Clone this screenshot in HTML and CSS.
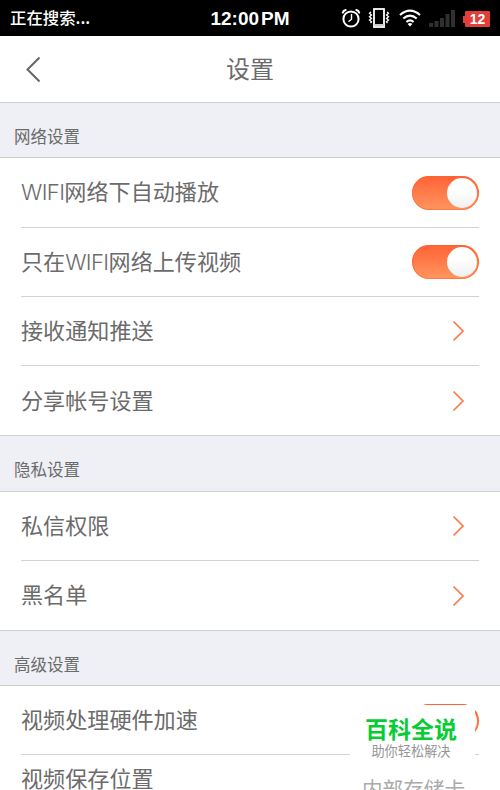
FILE: index.html
```
<!DOCTYPE html>
<html lang="zh-CN">
<head>
<meta charset="utf-8">
<title>设置</title>
<link rel="stylesheet" href="styles.css">
</head>
<body>
<div class="screen">
  <header class="status">
    <span class="carrier">正在搜索...</span>
    <span class="clock">12:00<span class="meridiem">PM</span></span>
    <div class="indicators">
      <svg class="alarm" width="20" height="20" viewBox="0 0 20 20"><g fill="none" stroke="#fff" stroke-width="2" stroke-linecap="round"><circle cx="10" cy="11" r="7.6"/><path d="M10.5 6.5V11.2L8 13.2" stroke-width="1.4"/><path d="M1.8 4.6Q2.5 2.4 4.7 2M18.2 4.6Q17.5 2.4 15.3 2" stroke-width="2"/></g></svg>
      <svg class="vibrate" width="22" height="20" viewBox="0 0 22 20"><g fill="none" stroke="#fff"><rect x="6" y="1" width="10" height="18" stroke-width="1.8"/><path d="M6 17H16" stroke-width="2" stroke="#ccc"/><path d="M3 4L1.5 5.3L3.5 7L1.5 8.7L3.5 10.4L1.5 12.1L3.5 13.8L2.5 15M19 4L20.5 5.3L18.5 7L20.5 8.7L18.5 10.4L20.5 12.1L18.5 13.8L19.5 15" stroke-width="1.3"/></g></svg>
      <svg class="wifi" width="22" height="18" viewBox="0 0 22 18"><g fill="none" stroke="#fff" stroke-width="2.1"><path d="M1 6Q11-2.6 21 6M4.3 9.5Q11 3.6 17.7 9.5M7.4 13Q11 9.8 14.6 13"/></g><path d="M11 17.5L8.6 15Q11 13 13.4 15Z" fill="#fff"/></svg>
      <svg class="signal" width="27" height="18" viewBox="0 0 27 18"><path d="M0 13h4v4H0zM5.5 11h4v6h-4zM11 8h4v9h-4zM16.5 4h4v13h-4zM22 0h4v17h-4z" fill="#303030"/></svg>
      <span class="battery">12</span>
    </div>
  </header>
  <nav class="navbar">
    <svg class="back" width="18" height="28" viewBox="0 0 18 28"><path d="M14.5 2.5L2.5 14.5L14.5 26.5" fill="none" stroke="#666" stroke-width="2"/></svg>
    <h1>设置</h1>
  </nav>
  <h2 class="section">网络设置</h2>
  <div class="group">
    <div class="row"><span class="label"><span class="latin">WIFI</span>网络下自动播放</span><i class="toggle"></i></div>
    <div class="row"><span class="label">只在<span class="latin">WIFI</span>网络上传视频</span><i class="toggle"></i></div>
    <div class="row"><span class="label">接收通知推送</span><svg class="chevron" width="14" height="22" viewBox="0 0 14 22"><path d="M1.5 1.5L11 11L1.5 20.5"/></svg></div>
    <div class="row"><span class="label">分享帐号设置</span><svg class="chevron" width="14" height="22" viewBox="0 0 14 22"><path d="M1.5 1.5L11 11L1.5 20.5"/></svg></div>
  </div>
  <h2 class="section">隐私设置</h2>
  <div class="group">
    <div class="row"><span class="label">私信权限</span><svg class="chevron" width="14" height="22" viewBox="0 0 14 22"><path d="M1.5 1.5L11 11L1.5 20.5"/></svg></div>
    <div class="row"><span class="label">黑名单</span><svg class="chevron" width="14" height="22" viewBox="0 0 14 22"><path d="M1.5 1.5L11 11L1.5 20.5"/></svg></div>
  </div>
  <h2 class="section">高级设置</h2>
  <div class="group">
    <div class="row"><span class="label">视频处理硬件加速</span><i class="toggle"></i></div>
    <div class="row storage"><span class="label">视频保存位置</span><span class="value">内部存储卡</span></div>
  </div>
  <div class="stamp"><strong>百科全说</strong><small>助你轻松解决</small></div>
</div>
</body>
</html>
```
FILE: styles.css
```
* { box-sizing: border-box; }
body { margin: 0; }
.screen {
  position: relative;
  width: 500px;
  height: 790px;
  overflow: hidden;
  background: #fff;
  color: #6b6b6b;
  font-family: "Liberation Sans", "Noto Sans CJK SC", sans-serif;
}
.status {
  display: grid;
  grid-template-columns: 200px 100px 200px;
  align-items: center;
  height: 36px;
  background: #000;
  color: #fff;
}
.carrier {
  padding-left: 10px;
  margin-top: -3px;
  font: 500 16.4px/36px "Noto Sans CJK SC", sans-serif;
}
.clock {
  margin-top: 1px;
  text-align: center;
  white-space: nowrap;
  font: bold 19px/36px "Liberation Sans", sans-serif;
}
.meridiem { margin-left: 2px; }
.indicators { display: flex; align-items: center; height: 36px; padding-left: 41px; }
.alarm { margin-top: -1px; }
.vibrate { margin-left: 7px; margin-top: -1px; }
.wifi { margin-left: 9px; margin-top: -1px; }
.signal { margin-left: 8px; margin-top: 1px; }
.battery {
  position: relative;
  width: 25px;
  height: 16px;
  margin-left: 9px;
  border-radius: 1px;
  background: #e33e38;
  text-align: center;
  font: bold 14px/17px "Liberation Sans", sans-serif;
}
.battery::before {
  content: "";
  position: absolute;
  left: -2px;
  top: 5px;
  width: 2px;
  height: 7px;
  background: #e33e38;
}
.navbar {
  display: grid;
  grid-template-columns: 100px 300px 100px;
  align-items: center;
  height: 66px;
}
.back { margin-left: 25px; }
.navbar h1 {
  margin: -2px 0 0;
  text-align: center;
  font: 400 24px/66px "Noto Sans CJK SC", sans-serif;
}
.section {
  height: 56.4px;
  margin: 0;
  padding: 5px 14px 0;
  border-top: 1px solid #cfd0d2;
  border-bottom: 1px solid #cfd0d2;
  background: #eff0f5;
  font: 400 16.5px/56px "Noto Sans CJK SC", sans-serif;
}
.group { padding: 0 21px; }
.row {
  display: flex;
  align-items: center;
  justify-content: space-between;
  height: 69.2px;
  border-bottom: 1px solid #d2d2d2;
  font: 400 22.1px/40px "Noto Sans CJK SC", sans-serif;
}
.row:last-child { border-bottom: 0; }
.label { height: 40px; margin-top: -4px; }
.latin { font-family: Inter, sans-serif; font-weight: 300; font-size: 22px; line-height: 1; letter-spacing: -0.6px; }
.toggle {
  width: 67px;
  height: 34px;
  margin-top: 1px;
  padding: 2px;
  border-radius: 17px;
  background: linear-gradient(#ff6236, #ff965f);
  box-shadow: inset 0 0 0 1px rgba(255, 100, 48, .6);
}
.toggle::after {
  content: "";
  display: block;
  width: 30px;
  height: 30px;
  margin-left: auto;
  border-radius: 50%;
  background: linear-gradient(#fff 40%, #f0f0f0);
}
.chevron { margin-right: 13px; margin-top: 1px; fill: none; stroke: #ff7849; stroke-width: 1.7; }
.storage { height: 48px; }
.storage .value { padding: 18px 14px 0 0; font-size: 20.6px; color: #aaa; }
.stamp {
  position: absolute;
  left: 350px;
  top: 705px;
  width: 125px;
  height: 70px;
  display: flex;
  flex-direction: column;
  align-items: center;
  background: #fff;
  font-family: "Noto Sans CJK SC", sans-serif;
}
.stamp strong { margin-top: 8px; margin-right: 3px; font-weight: 700; font-size: 23px; line-height: 30px; color: #05cd33; }
.stamp small { margin-top: 1px; margin-right: 3px; font-size: 13.2px; line-height: 14px; color: #959595; }
```
